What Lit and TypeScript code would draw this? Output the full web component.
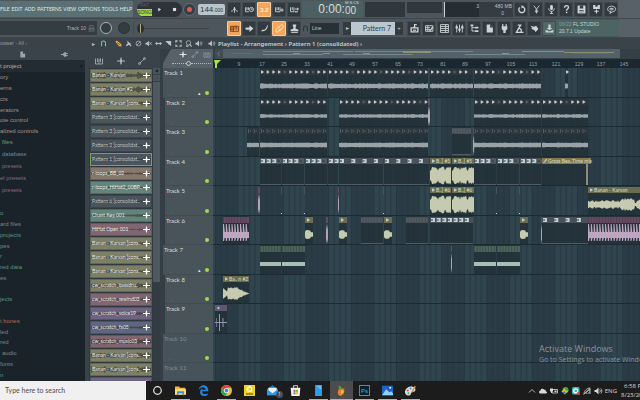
import { LitElement, html, svg, css, nothing } from "lit";
import { customElement, property } from "lit/decorators.js";
import { classMap } from "lit/directives/class-map.js";

const ICONS: Record<string, unknown> = {
  play: svg`<path d="M4 2l9 6-9 6z"/>`,
  stop: svg`<rect x="3" y="3" width="10" height="10"/>`,
  metro: svg`<path class="s" d="M8 14V4M2 11c4 0 5-3 6-7 1 4 2 7 6 7"/>`,
  keysclock: svg`<path class="s" d="M1 4v8h6M3.500 4v5M6 4v5"/><circle class="s" cx="11.500" cy="8" r="3.700"/><path class="s t" d="M11.500 6v2h2"/>`,
  count: svg`<text x="8" y="12" text-anchor="middle" font-size="11" font-weight="700">3.2</text>`,
  keysplus: svg`<path class="s" d="M1 4v8h8V4M3.700 4v5M6.400 4v5M12.500 6v6M9.500 9h6"/>`,
  keysloop: svg`<path class="s" d="M1 4v8h6V4M4 4v5"/><path d="M9 6h4V4l3 3-3 3V8H9zM14 11H11v-1l-3 2 3 2v-1h3z"/>`,
  keyboard: svg`<path class="s" d="M1 4h14v9H1zM1 7h5M1 10h5M6 4v9M9 4v6M12 4v6"/>`,
  arrow: svg`<path d="M1 6h7V2l7 6-7 6v-4H1z"/>`,
  brush: svg`<path d="M14 1c0 6-2 11-9 12H2l2-3c3 1 5 0 6-2 2-2 2-5 4-7z"/>`,
  link: svg`<path class="s" d="M7 6l3-4c3-2 6 1 4 4l-3 4c-2 2-4 1-4-1M9 10l-3 4c-3 2-6-1-4-4l3-4c2-2 4-1 4 1"/>`,
  stamp: svg`<path d="M5 1h6v3l-1 1v3l5 2v3H1v-3l5-2V5L5 4z"/><path class="s" d="M2 15h12"/>`,
  magnet: svg`<path class="s w" d="M3.500 14V7a4.500 4.500 0 0 1 9 0v7"/>`,
  power: svg`<path class="s w" d="M9 3a5.300 5.300 0 1 1-4 1.300"/><path d="M8 0l4 3-4 3z"/>`,
  scissors: svg`<path class="s" d="M3 1l7 9M13 1L6 10M8 9v6M5 12h6"/>`,
  mic: svg`<rect x="5.500" y="0" width="5" height="9" rx="2.500"/><path class="s" d="M3 6c0 7 10 7 10 0M8 11v4M5 15h6"/>`,
  help: svg`<path class="s w" d="M4.500 5c0-5 7-5 7-1 0 3-3.500 3-3.500 6"/><rect x="7" y="12" width="2.500" height="2.500"/>`,
  save: svg`<path d="M1 1h14v14H1z"/><path class="k" d="M5 1h6v5H5zM4 9h8v1H4zM4 12h8v1H4z"/>`,
  savenew: svg`<path d="M2 0h12v7H2zM7 8h2v2h3v2H9v3H7v-3H4v-2h3z"/><path class="k" d="M6 0h4v3H6z"/>`,
  chat: svg`<path class="s" d="M8 2c-9 0-9 10-1 10l-2 3 5-3c8-1 7-10-2-10zM4.500 6h7M4.500 8.500h7"/>`,
  render: svg`<path class="s w" d="M2 7h12v7H2z"/><path d="M7 0h5v2H9v3h2L8 8 5 5h2z"/><path d="M5 10h6v2H5z"/>`,
  playlist: svg`<path class="s" d="M1 3h13v10H1zM1 6.500h8M1 10h8M5 3v10"/><path class="s w" d="M8 13l6-8"/>`,
  rack: svg`<path class="s" d="M1 1h14v14H1zM1 4.500h14M1 8h14M1 11.500h14M10 1v14"/>`,
  mixer: svg`<path class="s" d="M3 1v14M8 1v14M13 1v14"/><path d="M1 4h4v4H1zM6 8h4v4H6zM11 4h4v4h-4z"/>`,
  tree: svg`<path d="M1 1h5v3H1zM9 5h6v3H9zM9 11h6v3H9z"/><path class="s" d="M3.500 4v8.500H9M3.500 6.500H9"/>`,
  file: svg`<path d="M3 1h6l5 5v9H3z"/><path class="k" d="M9 1v5h5z"/>`,
  plug: svg`<path d="M4 0h2v4h4V0h2v4h1v5l-3 3v4H6v-4L3 9V4h1z"/>`,
  plugside: svg`<path d="M0 7h4l4-4h4v2h4v2h-4v2h4v2h-4v2H8L4 9H0z"/>`,
  figure: svg`<path class="s w" d="M5 2h5l-3 5 4 3v4M7 7l-4 7M1 15h14"/>`,
  hand: svg`<path d="M1 3l6 2 4-2 4 6-5 5-3-4-5-1 2-2z"/>`,
  download: svg`<path d="M6 1h4v6h3l-5 4-5-4h3zM1 11h3l2 2h4l2-2h3v4H1z"/>`,
  pencil: svg`<path d="M1 4l3-3 10 8 1 6-6-1z"/><path class="s k2" d="M5 6l6 5"/>`,
  paint: svg`<path d="M5 1l5 5 3 1-1 2 3 4-2 2-4-4-5 3-2-2 4-4z"/>`,
  no: svg`<circle class="s" cx="8" cy="8" r="5.500"/><path class="s" d="M4 12l8-8"/>`,
  mute: svg`<path d="M1 6h3l5-4v12L4 10H1z"/><path class="s" d="M10 5l5 6M15 5l-5 6"/>`,
  slip: svg`<path d="M0 8l5-4v3h6V4l5 4-5 4V9H5v3z"/>`,
  slice: svg`<path d="M1 2h13v12l-4-4-2 1-2-4-2-1z"/>`,
  select: svg`<path class="s w" d="M2 6V2h4M10 2h4v4M14 10v4h-4M6 14H2v-4"/>`,
  zoom: svg`<circle class="s" cx="8" cy="6.500" r="5"/><path class="s w" d="M11 10l4 5M2 14h6"/>`,
  speaker: svg`<path d="M1 6h3l5-5v14l-5-5H1z"/><path class="s" d="M11 5c2 2 2 4 0 6M13.500 3c3 3 3 7 0 10"/>`,
  keys: svg`<path class="s" d="M1 3v11h14V3M5 3v7M8 3v11M11 3v7"/>`,
  auto: svg`<path class="s" d="M3 13L13 3"/><circle class="s" cx="3" cy="13" r="2"/><circle class="s" cx="13" cy="3" r="2"/>`,
  cross: svg`<path d="M0 7h6l1-6h2l1 6h6v2h-6l-1 6H7L6 9H0z"/>`,
  up: svg`<path class="s" d="M2 11l6-6 6 6"/>`,
  left: svg`<path class="s" d="M10 2L5 8l5 6"/>`,
  fader: svg`<path class="s" d="M4 1h8v6H4zM2 8h12v6H2zM2 11h12"/>`,
  cloud: svg`<path d="M3 13a3 3 0 0 1 0-6 4 4 0 0 1 7-2 4 4 0 0 1 4 4 2 2 0 0 1 0 4z"/>`,
  battery: svg`<path class="s" d="M4 5h11v7H4z"/><path d="M0 3h6v6H4v3H2V9H0zM9 7h4v3H9z"/>`,
  wifi: svg`<path class="s" d="M2 14C2 8 8 2 14 2v12M6 14c0-4 4-8 8-8M10 14c0-2 2-4 4-4M1 15L14 3"/>`,
  idm: svg`<circle cx="9" cy="6" r="6" fill="#45a83c"/><path d="M1 9l6-6 3 5 5-1-7 8z" fill="#f0c52e"/><path d="M2 11l6-3 2 6z" fill="#2f74d0"/>`,
  teal: svg`<rect x="0" y="0" width="15" height="15" rx="3" fill="#3db4b8"/><circle cx="7.500" cy="7.500" r="4" fill="none" stroke="#fff" stroke-width="2.500"/><circle cx="13" cy="13" r="3" fill="#d8453b"/>`,
  ring: svg`<circle cx="8" cy="8" r="5.500" fill="none" stroke="#e8e8e8" stroke-width="1.800"/>`,
  explorer: svg`<path d="M0 2h6l1 2h8v10H0z" fill="#e9b94a"/><path d="M0 6h16v8H0z" fill="#f9dc86"/><path d="M3 9h10v6h-2v-3H5v3H3z" fill="#3c8edb"/>`,
  edge: svg`<path d="M1 7C2-2 15-2 15 8v1H6c0 5 5 5 8 3v3C8 18 2 15 3 9c1-3 3-4 4-4-1 1-1 2-1 2h5c0-5-7-5-10 0z" fill="#1f84dc"/>`,
  chrome: svg`<circle cx="8" cy="8" r="8" fill="#e8c12c"/><path d="M1 4a8 8 0 0 1 14 0H8L5 9z" fill="#dc4437"/><path d="M1 4l4 6 4 0-2 6A8 8 0 0 1 1 4z" fill="#35a353"/><circle cx="8" cy="8" r="3.700" fill="#fff"/><circle cx="8" cy="8" r="2.800" fill="#4285f4"/>`,
  pot: svg`<path d="M0 0h16v16H0z" fill="#f2d21f"/><circle cx="8" cy="6" r="3.200" fill="none" stroke="#fff" stroke-width="2"/><path d="M3 12h10v2H3z" fill="#7c6a10"/>`,
  mail: svg`<path d="M0 6l8-6 8 6v9H0z" fill="#1670b8"/><path d="M2 4h12v5l-6 4-6-4z" fill="#eef5fa"/><path d="M0 6l8 6 8-6v9H0z" fill="#2f9be4"/>`,
  store: svg`<path d="M1 4h14l-1 12H2z" fill="#f2f2f2"/><path d="M5 4V1h6v3" fill="none" stroke="#f2f2f2" stroke-width="1.200"/><path d="M5 7h3v3H5z" fill="#e8542a"/><path d="M8.500 7h3v3h-3z" fill="#80b52b"/><path d="M5 10.500h3v3H5z" fill="#2a9fdc"/><path d="M8.500 10.500h3v3h-3z" fill="#f1b62b"/>`,
  phone: svg`<path d="M3 0h10v16H3z" fill="#2d9fe6"/><path d="M4 1h8v6z" fill="#63c3f5"/>`,
  fruit: svg`<path d="M4 6c3-3 10-1 8 4-1 4-4 6-6 6-4-2-4-7-2-10z" fill="#ef7a22"/><path d="M8 7c3 0 4 2 2 5s-3 1-3-1z" fill="#f7c24a"/><path d="M4 1c3 0 4 2 5 5l4-3-2 4-5-1C4 5 3 3 4 1z" fill="#4e9d3a"/>`,
  ps: svg`<rect x="0.700" y="0.700" width="14.600" height="14.600" fill="#06212d" stroke="#1aa7cb" stroke-width="1.400"/><text x="8" y="11.500" text-anchor="middle" font-size="9" fill="#27bde4">Ps</text>`,
  photos: svg`<path d="M0 1h16v14H0z" fill="#1d62c4"/><path d="M0 15l6-9 5 5 2-2 3 3v3z" fill="#8fd0f8"/><circle cx="12" cy="4" r="1.500" fill="#fff"/>`,
  palette: svg`<path d="M9 2c8 0 8 8 2 8-2 0-2 2-3 4-4 3-8 0-8-4s4-8 9-8z" fill="#dbe2e6"/><circle cx="4" cy="8" r="1.500" fill="#d8453b"/><circle cx="8" cy="5" r="1.500" fill="#3f8ed8"/><circle cx="5" cy="12" r="1.500" fill="#4aa84a"/><path d="M9 10l5-9 2 1-5 9z" fill="#d98b3e"/>`,
};

@customElement("fl-icon")
class FlIcon extends LitElement {
  @property() name = "";
  static styles = css`
    :host { display: inline-flex; flex: none; width: 9px; height: 9px; }
    svg { width: 100%; height: 100%; fill: currentColor; overflow: visible; font-family: "Liberation Sans", sans-serif; }
    .s { fill: none; stroke: currentColor; stroke-width: 1.6; }
    .w { stroke-width: 2.4; }
    .k { fill: #353c42; }
    .k2 { stroke: #353c42; }
  `;
  render() {
    return html`<svg viewBox="0 0 16 16" aria-hidden="true">${ICONS[this.name]}</svg>`;
  }
}

/** Deterministic noise in 0..1 so that waveforms are stable between renders. */
const noise = (n: number) => {
  const v = Math.sin(n * 127.1 + 11.7) * 43758.5453;
  return v - Math.floor(v);
};

type Envelope = (t: number, n: number) => number;
const wavePath = (x: number, w: number, mid: number, amp: number, env: Envelope) => {
  const top: string[] = [];
  const bottom: string[] = [];
  for (let i = 0; i <= w; i++) {
    const a = Math.max(0.3, amp * env(i / w, noise(x + i)));
    top.push(`${x + i},${(mid - a).toFixed(1)}`);
    bottom.unshift(`${x + i},${(mid + a).toFixed(1)}`);
  }
  return `M${top.join("L")}L${bottom.join("L")}Z`;
};

interface Clip {
  kind: "beat" | "steps" | "pattern" | "ghost" | "olive" | "pink" | "green" | "purple" | "sliver" | "automation" | "hair";
  x: number;
  w: number;
  label?: string;
  shape?: "thin" | "thick" | "block" | "burst" | "tail" | "song" | "every2";
}
const c = (kind: Clip["kind"], x: number, w: number, shape?: Clip["shape"], label?: string): Clip => ({ kind, x, w, shape, label });

interface Track { name: string; nested?: boolean; parent?: boolean; idle?: boolean; clips: Clip[] }
const TRACKS: Track[] = [
  { name: "Track 1", parent: true, clips: [c("beat", 47, 67, "thick"), c("beat", 115, 100, "thick"), c("beat", 217, 43, "thick"), c("beat", 261, 67, "thick"), c("beat", 352, 3, "thick")] },
  { name: "Track 2", nested: true, clips: [c("beat", 47, 67, "thin"), c("beat", 126, 89, "thin"), c("sliver", 215, 2), c("beat", 261, 67, "thin"), c("beat", 329, 46, "thin")] },
  { name: "Track 3", nested: true, clips: [c("steps", 34, 12), c("steps", 47, 67), c("steps", 126, 89), c("ghost", 239, 19), c("sliver", 260, 2), c("steps", 261, 67), c("steps", 329, 46)] },
  { name: "Track 4", nested: true, clips: [c("pattern", 47, 21), c("pattern", 69, 22), c("pattern", 92, 22), c("pattern", 115, 10), c("pattern", 126, 44, "every2"), c("pattern", 171, 45, "every2"), c("olive", 217, 21, "block", "B..] #5"), c("olive", 239, 22, "block", "B..] #5"), c("pattern", 261, 22), c("pattern", 284, 22), c("pattern", 307, 21), c("automation", 329, 49, undefined, "Gross Bea..Time mix")] },
  { name: "Track 5", nested: true, clips: [c("sliver", 45, 2), c("hair", 68, 1), c("hair", 91, 1), c("sliver", 125, 1), c("hair", 170, 1), c("olive", 217, 21, "block", "B..] #6"), c("olive", 239, 22, "block", "B..] #6"), c("hair", 283, 1), c("hair", 306, 1), c("olive", 375, 400, "song", "Banan - Karvan")] },
  { name: "Track 6", nested: true, clips: [c("pink", 10, 26), c("olive", 92, 8, "tail"), c("sliver", 113, 2), c("olive", 126, 8, "tail"), c("ghost", 148, 22), c("olive", 171, 8, "tail"), c("ghost", 193, 22), c("pattern", 217, 43), c("olive", 307, 8, "tail"), c("sliver", 328, 1), c("pattern", 329, 46, "every2"), c("pink", 375, 400)] },
  { name: "Track 7", parent: true, clips: [c("green", 47, 21), c("green", 69, 23), c("sliver", 238, 1), c("green", 261, 22), c("green", 284, 23)] },
  { name: "Track 8", nested: true, clips: [c("olive", 10, 26, "burst", "Ba.. n #2")] },
  { name: "Track 9", nested: true, clips: [c("purple", 2, 12)] },
  { name: "Track 10", idle: true, clips: [] },
  { name: "Track 11", idle: true, clips: [] },
];

const steps = (w: number, pitch: number) => Array.from({ length: Math.max(1, Math.floor((w + 2) / pitch)) }, (_, i) => i);
const MARK = "h1v-1l2 1.500-2 1.500v-1h-1z";

function drawClip(k: Clip) {
  const body = svg`<rect class="body" x=${k.x} y="0" width=${k.w} height="29"/>`;
  const head = (cls: string) => svg`<rect class=${cls} x=${k.x} y="1" width=${k.w} height="6"/>`;
  switch (k.kind) {
    case "beat":
      return svg`${body}${head("h-dark")}
        ${steps(k.w, 5.65).map((i) => svg`<path class=${i % 5 === 4 ? "dim" : "lit"} d="M${k.x + 1 + i * 5.65} 3.500${MARK}M${k.x + 1 + i * 5.65} 2.500h1v3h-1z"/>`)}
        <path class="w-grey" d=${wavePath(k.x, k.w, 18, k.shape === "thin" ? 2 : 2.8, (_t, n) => 0.6 + n * 0.4)}/>`;
    case "steps":
      return svg`${body}${head("h-dark")}
        ${steps(k.w, 5.65).map((i) => svg`<path class="dim" d="M${k.x + 1 + i * 5.65} 2h1v4h-1zM${k.x + 3 + i * 5.65} 3h1v2h-1z"/>`)}
        <path class="w-grey" d=${wavePath(k.x, k.w, 18, 2.4, (_t, n) => 0.85 + n * 0.15)}/>`;
    case "pattern":
      return svg`${body}${head("h-grey")}
        ${steps(k.w, k.shape ? 11.3 : 5.65).map((i) => {
          const x = k.x + 1 + i * (k.shape ? 11.3 : 5.65);
          return svg`<path class=${!k.shape && k.w < 30 && i === 3 ? "dim" : "cell"} d="M${x} 2h4v4h-4z"/><path class="h-dark" d="M${x} 3h2v.6h-2zM${x} 4.400h2v.6h-2z"/>`;
        })}
        <rect class="dim" x=${k.x} y="27" width=${k.w} height="1.500"/>`;
    case "ghost":
      return svg`${body}${head("h-grey")}
        ${steps(k.w, 2.83).map((i) => svg`<rect class="dim" x=${k.x + i * 2.83} y="2" width="1.500" height="4"/>`)}
        <rect class="dim" x=${k.x} y="27" width=${k.w} height="1.500"/>`;
    case "olive": {
      const env: Envelope =
        k.shape === "block" ? (t, n) => (t % 0.34 < 0.05 ? 0.55 : 0.75 + n * 0.25)
        : k.shape === "tail" ? (t, n) => (t < 0.12 ? 0.3 : t < 0.65 ? 0.42 + n * 0.08 : 0.25)
        : k.shape === "burst" ? (t, n) => (t < 0.18 ? 0.6 - t * 2.4 : (0.45 + n * 0.2 + (t < 0.6 ? 0.1 : 0)) * Math.min(1, (1 - t) * 2.2))
        : (t, n) => { const p = (t * k.w) / 52; return p < 0.62 ? 0.25 + n * 0.25 : p < 0.9 ? 0.4 + n * 0.35 : p < 0.94 ? 0.15 : 0.4 + n * 0.2; };
      return svg`${body}${head("h-olive")}
        <path class="lit" d="M${k.x + 2} 3.500${MARK}M${k.x + 2} 2.500h1v3h-1z"/>
        <path class="w-olive" d=${wavePath(k.x, k.w, 18.5, 9, env)}/>
        ${k.label ? svg`<text x=${k.x + 6} y="6">${k.label}</text>` : nothing}`;
    }
    case "pink":
      return svg`${body}${head("h-pink")}
        <rect class="w-pink" x=${k.x} y="16" width=${k.w} height="6"/>
        ${steps(k.w, 2.83).map((i) => svg`<path class="w-pink" d="M${k.x + i * 2.83} 8h1l.8 8v5l-.8 4h-1z"/><rect class="tick" x=${k.x + i * 2.83} y="1" width="0.700" height="6"/>`)}`;
    case "green":
      return svg`${body}${head("h-green")}
        ${steps(k.w, 2.83).map((i) => svg`<rect class="tick" x=${k.x + i * 2.83} y="1" width="0.800" height="6"/>`)}
        <rect class="w-green" x=${k.x} y="17" width=${k.w} height="4"/>`;
    case "purple":
      return svg`${body}${head("h-purple")}
        <path class="lit" d="M${k.x + 2} 3.500${MARK}"/>
        <path class="w-purple" d="M2 18h1v-4h.6v4h2.400V10h1v8h2.500v-4h1v4H14v1h-3.500v4h-1v-4H7v8H6v-8H3.600v4H3v-4H2z"/>`;
    case "automation":
      return svg`<rect class="body" x=${k.x} y="0" width="46" height="29"/>${head("h-gold")}
        <path class="w-edge" d="M${k.x} 28h44V7h2v22h-46z"/>
        <path class="lit" d="M${k.x + 1} 6l3-4h1v1l-3 3z"/>
        <text x=${k.x + 6} y="6">${k.label}</text>`;
    case "sliver":
      return svg`<rect class="h-pink" x=${k.x} y="1" width=${k.w} height="6"/><path class="w-sliver" d="M${k.x} 14l${k.w / 2}-6 ${k.w / 2} 6v9l-${k.w / 2} 5-${k.w / 2}-5z"/>`;
    case "hair":
      return svg`<rect class="hair" x=${k.x} y="1" width=${k.w} height="7"/><rect class="lit" x=${k.x} y="27" width="1" height="1"/>`;
  }
}

@customElement("fl-lane")
class FlLane extends LitElement {
  @property({ attribute: false }) clips: Clip[] = [];
  static styles = css`
    :host { display: block; overflow: hidden; border-bottom: 1px solid #1b2a33; box-sizing: border-box; }
    svg { display: block; width: 100%; height: 29px; }
    text { font: 5px Lato, "Liberation Sans", sans-serif; fill: #dcddc4; }
    .body { fill: #232f37; fill-opacity: 0.8; }
    .h-dark { fill: #2c363c; }
    .h-grey { fill: #485158; }
    .h-olive { fill: #6a6c50; }
    .h-gold { fill: #827a4c; }
    .h-pink { fill: #684a64; }
    .h-green { fill: #4b6559; }
    .h-purple { fill: #5f5874; }
    .lit { fill: #c4cbcd; }
    .dim { fill: #525c63; }
    .cell { fill: #c3d0d6; }
    .hair { fill: #4b525a; }
    .tick { fill: #2b3038; fill-opacity: 0.5; }
    .w-grey { fill: #98a2a7; }
    .w-olive { fill: #c6cab0; }
    .w-pink { fill: #bea5c0; }
    .w-green { fill: #a9beb5; }
    .w-purple { fill: #9695b0; }
    .w-edge { fill: #8b8d78; }
    .w-sliver { fill: #b5a3b3; }
  `;
  render() {
    return html`<svg aria-hidden="true">${this.clips.map(drawClip)}</svg>`;
  }
}

interface Source { name: string; tone: string; selected?: boolean; level: number }
const s = (name: string, tone: string, level: number, selected = false): Source => ({ name, tone, level, selected });
const SOURCES: Source[] = [
  s("Banan - Karvan", "olive", 4), s("Banan - Karvan #2", "olive", 4), s("Banan - Karvan [cons..", "olive", 3),
  s("Pattern 3 [consolidat..", "slate", 1), s("Pattern 3 [consolidat..", "slate", 1), s("Pattern 2 [consolidat..", "slate", 1), s("Pattern 1 [consolidat..", "slate", 1, true),
  s("r-loops_BB_02", "taupe", 2), s("r-loops_HiHat2_00BP..", "teal", 1), s("Pattern 6 [consolidat..", "slate", 1), s("Chant Key 001", "teal", 2), s("HiHat Open 001", "rose", 1),
  s("Banan - Karvan [cons..", "olive", 2), s("Banan - Karvan [cons..", "olive", 2), s("Banan - Karvan [cons..", "olive", 2),
  s("cw_scratch_bassdru..", "olive", 3), s("cw_scratch_rewind03", "rose", 2), s("cw_scratch_voice19", "violet", 2), s("cw_scratch_fx05", "blue", 2), s("cw_scratch_music03", "rose", 4),
  s("Banan - Karvan [cons..", "olive", 4), s("Banan - Karvan [cons..", "olive", 4), s("", "violet", 3),
];

type Entry = [string, string];
const TREE: { spacing: string; items: Entry[] }[] = [
  { spacing: "near", items: [["ory", "sand"], ["erns", "sand"], ["cts", "sand"], ["erators", "sand"], ["ote control", "sand"], ["alized controls", "sand"], ["files", "leaf"]] },
  { spacing: "wide", items: [["database", "sky"], ["presets", "plum"], ["el presets", "plum"], ["presets", "plum"], ["", "mint"]] },
  { spacing: "near", items: [["o", "leaf"], ["ard files", "mist"], ["projects", "mint"], ["pes", "mist"], ["r", "mint"], ["red data", "mint"], ["es", "mist"], ["", "mist"], ["jects", "mint"], ["", "mist"], ["t bones", "rust"], ["led", "mist"], ["red", "mist"], ["audio", "mist"], ["fonts", "mist"], ["n", "mint"]] },
];
const INDENTED = new Set(["files", "database", "presets", "audio"]);

const MENU = ["FILE", "EDIT", "ADD", "PATTERNS", "VIEW", "OPTIONS", "TOOLS", "HELP"];
const TOOLS = [["pencil", "Draw", "hot"], ["paint", "Paint", ""], ["no", "Delete", ""], ["mute", "Mute", ""], ["slip", "Slip", ""], ["slice", "Slice", ""], ["select", "Select", ""], ["zoom", "Zoom", ""], ["speaker", "Playback", ""]];
const APPS = [["ring", "Cortana", ""], ["explorer", "File Explorer", "open"], ["edge", "Edge", ""], ["chrome", "Chrome", "open"], ["pot", "PotPlayer", ""], ["mail", "Mail", ""], ["store", "Store", ""], ["phone", "Your Phone", "open"], ["fruit", "FL Studio", "open front"], ["ps", "Photoshop", "open"], ["photos", "Photos", "open"], ["palette", "Paint", "open"]];

@customElement("app-root")
class AppRoot extends LitElement {
  static styles = css`
    :host { display: flex; flex-direction: column; height: 100vh; min-height: 240px; overflow: hidden; background: #2e3f4a; color: #b9c2c6; font: 6px/8px "Liberation Sans", sans-serif; }
    * { box-sizing: border-box; }
    button, input, select { font: inherit; color: inherit; border: 0; padding: 0; margin: 0; background: none; min-width: 0; border-radius: 0; }
    ul { list-style: none; margin: 0; padding: 0; }
    .bar { display: flex; align-items: center; flex: none; height: 19px; background: #4d565d; border-bottom: 1px solid #3f474d; overflow: hidden; }
    .menu { display: flex; flex: none; align-items: center; justify-content: space-between; width: 133px; height: 16px; background: #5a7074; color: #e2e9ea; padding-right: 1px; font: 5px/8px Lato, sans-serif; }
    .menu button { flex: none; }
    .transport { display: flex; align-items: center; width: 45px; height: 15px; margin-left: 4px; border-radius: 8px; background: #2d3338; overflow: hidden; flex: none; color: #d8dddf; }
    .mode { display: flex; flex-direction: column; width: 15px; height: 15px; font-size: 5px; line-height: 7px; text-align: center; color: #5a6166; }
    .mode .song { background: #a0d84e; color: #2e4315; }
    .transport button { flex: 1; display: grid; place-items: center; }
    .transport fl-icon { width: 5px; height: 5px; }
    .rec { width: 13px; height: 13px; border-radius: 50%; background: #373e44; border: 1px solid #646d74; margin: 0 2px 0 1px; flex: none; display: grid; place-items: center; }
    .rec::after { content: ""; width: 5px; height: 5px; border-radius: 50%; background: #ea5748; }
    .tempo { display: flex; align-items: baseline; justify-content: center; width: 27px; height: 11px; line-height: 11px; background: #b9c5cb; color: #2d363c; border-radius: 2px; font-size: 8px; flex: none; margin-right: 2px; }
    .tempo small { font-size: 5px; }
    .keys { display: flex; gap: 1px; flex: none; }
    .key { display: grid; place-items: center; width: 14px; height: 15px; background: #32393f; border: 1px solid #414a50; border-radius: 1px; color: #ced3d5; flex: none; }
    .key.hot { background: #f0a45e; border-color: #ffcb92; color: #7b3c14; }
    .key.glow { background: #f4a65c; border-color: #ffcb92; color: #fff0d0; }
    .key.soft { background: #4f6965; }
    .time { display: grid; grid-template-columns: auto auto; grid-template-rows: 4px 12px; justify-content: center; width: 61px; height: 17px; background: #4d6061; color: #d3dcdc; font-size: 12px; line-height: 11px; flex: none; margin-left: 1px; padding-left: 12px; }
    .time b { grid-row: 1 / -1; font-weight: 400; padding-top: 3px; }
    .time small { font-size: 10px; grid-column: 2; padding-top: 1px; line-height: 10px; }
    .time i { grid-column: 2; grid-row: 1; justify-self: end; font: 4px/4px "Liberation Sans", sans-serif; }
    .well { background: #30373d; height: 15px; flex: none; margin-left: 2px; }
    .scope { width: 40px; }
    .pitch { width: 35px; height: 11px; align-self: flex-start; margin-top: 2px; }
    .load { display: grid; grid-template-columns: 1fr 1fr; width: 69px; margin: 0 1px 0 2px; line-height: 7px; text-align: right; padding: 1px 1px 0; border-left: 1px solid #c8d0d4; background: linear-gradient(90deg, #272e33 50%, #353d43 50%); font-size: 5px; }
    .load span:nth-child(3) { grid-column: 2; padding-right: 8px; }
    .rest { flex: 1; align-self: stretch; background: #586168; }
    .hint { display: flex; align-items: center; justify-content: flex-end; gap: 2px; width: 97px; height: 14px; background: #353c42; color: #aab2b6; padding-right: 2px; flex: none; font: 5px/8px "Liberation Sans", sans-serif; }
    .hint fl-icon { width: 7px; height: 7px; color: #6b747a; }
    .knobs { display: flex; gap: 6px; width: 37px; justify-content: center; flex: none; border-right: 1px solid #414a50; }
    .knob { width: 12px; height: 12px; border-radius: 50%; background: #343b41; border: 1px solid #a8b1b5; }
    .knob.off { border-color: #2c3338; }
    .shift { appearance: none; width: 72px; height: 9px; margin: 0 18px 0 3px; flex: none; background: linear-gradient(#4d565d 4px, #3c444a 4px, #3c444a 5px, #4d565d 5px); }
    .shift::-webkit-slider-thumb { appearance: none; width: 7px; height: 9px; border-radius: 50%; background: linear-gradient(90deg, #2b3237 3px, #b8a876 3px, #b8a876 4px, #2b3237 4px); }
    .snapicon { margin: 0 1px; color: #2f363b; width: 7px; height: 7px; }
    .snap { appearance: none; width: 29px; height: 11px; background: #2a3136; padding: 0 2px; color: #c0c7ca; font: 5px/11px "Liberation Sans", sans-serif; flex: none; }
    .selector { display: flex; align-items: stretch; height: 13px; margin: 0 4px; flex: none; }
    .selector button { background: #333a40; width: 8px; color: #c3c9cc; }
    .selector .pattern { width: 44px; background: #bac7cf; color: #354149; text-align: right; padding-right: 4px; font: 7px/13px Lato, sans-serif; }
    .news { width: 63px; height: 16px; background: #4c6563; color: #c3d2cf; padding: 1px 3px; flex: none; text-align: left; font-size: 5px; line-height: 7px; }
    .news span { color: #859c98; }

    .main { display: grid; grid-template-columns: 85px minmax(0, 1fr); flex: 1; min-height: 0; }
    .browser { display: flex; flex-direction: column; background: #1a232a; overflow: hidden; min-height: 0; }
    .crumb { height: 11px; background: #3a434a; color: #939ca1; font: 5px/11px "Noto Sans", sans-serif; }
    .tabs { display: flex; justify-content: space-around; align-items: center; height: 11px; padding-left: 2px; background: #3a434a; color: #9ba4a8; flex: none; }
    .tabs fl-icon { width: 7px; height: 7px; }
    .project { display: flex; justify-content: space-between; height: 12px; line-height: 12px; background: #232c33; color: #c7ab9c; flex: none; padding-right: 2px; text-align: left; }
    .project span:last-child { color: #0e1418; font-size: 5px; }
    .tree li { height: 11px; line-height: 11px; }
    .tree .near li:nth-child(4n) { height: 10px; line-height: 10px; }
    .tree .wide li { height: 12px; line-height: 13px; }
    .tree button { display: block; line-height: inherit; }
    .inset { padding-left: 2px; }
    .sand { color: #ad8f85; } .leaf { color: #6e9f68; } .sky { color: #6886a6; } .plum { color: #8d6586; } .mist { color: #76868f; } .mint { color: #5d9480; } .rust { color: #b06a53; }

    .playlist { display: flex; flex-direction: column; min-width: 0; min-height: 0; border-left: 4px solid #3a434a; }
    .title { display: flex; align-items: center; height: 11px; background: #3a434a; flex: none; overflow: hidden; gap: 1px; color: #bcc3c6; }
    .title .tool { width: 9px; height: 9px; flex: none; display: grid; place-items: center; }
    .title .tool fl-icon { width: 7px; height: 7px; }
    .title .on { color: #5cd08e; margin-right: 5px; }
    .title .hot { color: #eba84a; }
    .title h1 { margin: 0 0 0 1px; font: 600 6px/10px "Noto Sans", sans-serif; color: #c9d0d3; white-space: nowrap; }
    .title .spk { margin-left: 3px; }
    .work { display: flex; flex: 1; min-height: 0; }
    .picker { display: grid; grid-template-columns: 64px 7px; grid-template-rows: 19px minmax(0, 1fr); width: 74px; background: #353e45; flex: none; min-height: 0; }
    .picker .kinds { grid-column: 1 / -1; display: flex; justify-content: space-between; align-items: center; padding: 5px 14px 0 6px; background: #3a434a; color: #afb7bb; }
    .kinds fl-icon { width: 8px; height: 8px; }
    .sources { overflow: hidden; padding: 1px; background: #303940; }
    .source { display: grid; grid-template-columns: minmax(0, 1fr) 7px; align-items: center; width: 100%; height: 13px; margin-bottom: 1px; padding: 0 1px; text-align: left; color: #eceee8; position: relative; border: 1px solid #00000030; font: 5px/11px Lato, sans-serif; }
    .source svg { position: absolute; inset: 0; width: 100%; height: 100%; fill: #23262380; }
    .source span { position: relative; white-space: nowrap; }
    .source fl-icon { position: relative; width: 7px; height: 7px; color: #fff; }
    .olive { background: #7d7f66; } .slate { background: #4b545c; } .source.slate { color: #bcc4c8; } .taupe { background: #86786c; } .teal { background: #64847a; } .rose { background: #7f6670; } .violet { background: #6c6480; } .blue { background: #5f6682; }
    .source.selected { border-color: #7ba246; }
    .scroll { display: flex; flex-direction: column; background: #343c43; }
    .scroll button { height: 6px; color: #20272c; display: grid; place-items: center; background: #4b545b; margin-bottom: 1px; }
    .scroll fl-icon { width: 4px; height: 4px; }
    .thumb { flex: none; height: 64%; background: #4e5860; }

    .heads { width: 50px; flex: none; background: #343d44; overflow: hidden; }
    .corner { height: 19px; background: #566169; clip-path: polygon(8px 0, 100% 0, 100% 100%, 0 100%, 0 14px); display: grid; grid-template-rows: 10px 9px; justify-items: end; align-items: center; padding-right: 2px; }
    .corner div { display: flex; gap: 4px; color: #98a2a7; }
    .corner fl-icon { width: 8px; height: 7px; }
    .corner fl-icon:first-child { color: #e1e6e8; }
    .corner .zoomer { gap: 0; align-items: center; }
    .corner .zoomer::before { content: ""; width: 14px; border-top: 1px dotted #b3bbbf; }
    .corner .zoomer::after { content: ""; width: 20px; border-top: 1px dotted #b3bbbf; }
    .corner i { width: 5px; height: 5px; border: 1px solid #c1c9cc; border-radius: 50%; }
    .head { display: grid; grid-template-columns: 1fr 6px 6px; grid-template-rows: 9px 1fr; align-items: center; height: 29px; background: #48545a; border-bottom: 1px solid #414c52; padding: 0 3px 1px 1px; color: #d8dddf; }
    .head:nth-child(even), fl-lane:nth-child(odd) { height: 30px; }
    .head.nested { margin-left: 2px; }
    .head.idle { color: #818d92; background: #46535a; }
    .head b { grid-column: 1 / -1; font: 6px/8px Lato, sans-serif; }
    .head small { font-size: 4px; line-height: 4px; align-self: end; padding-left: 5px; color: #747f85; }
    .head span { font-size: 5px; color: #dde2e3; margin-top: 12px; }
    .head button { grid-column: 3; grid-row: 2; width: 4px; height: 4px; border-radius: 50%; background: #9bdc48; justify-self: center; margin-top: 12px; }

    .arrange { flex: 1; min-width: 0; display: flex; flex-direction: column; overflow: hidden; position: relative; }
    .map { display: flex; height: 10px; background: #353f46; flex: none; }
    .map button { width: 8px; color: #8b959a; display: grid; place-items: center; margin-left: 2px; background: #424c53; }
    .map button fl-icon { width: 6px; height: 6px; }
    .map svg { height: 9px; flex: 1; background: #52616a; margin-right: 20px; min-width: 0; }
    .ruler { height: 9px; background: #1b2831; flex: none; width: 100%; display: block; }
    .ruler text { font: 5px "Liberation Sans", sans-serif; fill: #97a1a5; text-anchor: middle; }
    .lanes { flex: 1; overflow: hidden; background: #2d3f4a; display: grid; min-height: 0; }
    .lanes > * { grid-area: 1 / 1; min-width: 0; min-height: 0; }
    .grid { width: 100%; height: 100%; }
    .rows { overflow: hidden; }
    fl-lane { height: 29px; }
    .notice { position: absolute; left: 326px; bottom: 16px; white-space: nowrap; color: #87949a; font: 7px/10px "Open Sans", sans-serif; }
    .notice strong { display: block; font-weight: 400; font-size: 9px; line-height: 13px; }

    .taskbar { display: flex; height: 19px; background: #1c1c1d; flex: none; color: #dadada; font-family: "Open Sans", sans-serif; overflow: hidden; }
    .search { width: 146px; background: #f0f0f0; padding: 0 5px; font: 7px/19px Lato, sans-serif; flex: none; }
    .search::placeholder { color: #4c4c4c; opacity: 1; }
    .app { width: 23px; height: 19px; display: grid; place-items: center; flex: none; position: relative; }
    .app fl-icon { width: 11px; height: 11px; }
    .app.open::after { content: ""; position: absolute; left: 2px; right: 2px; bottom: 0; height: 1px; background: #7cc9c4; }
    .app.front { background: #4c4c4c; }
    .app.front::after { left: 0; right: 0; }
    .count { position: absolute; right: 1px; bottom: 2px; width: 7px; height: 7px; border-radius: 50%; background: #47505a; font-size: 5px; line-height: 7px; }
    .tray { display: flex; align-items: center; gap: 3px; margin-left: auto; flex: none; font-size: 6px; }
    .tray fl-icon { width: 8px; height: 8px; }
    .tray .clock { width: 20px; overflow: hidden; white-space: nowrap; line-height: 9px; padding-left: 1px; }
    .clock span { display: block; }
    .clock .hour { padding-left: 3px; }
  `;

  private key(icon: string, label: string, cls = "") {
    return html`<button class="key ${cls}" aria-label=${label}><fl-icon name=${icon}></fl-icon></button>`;
  }

  private topBars() {
    return html`
      <header class="bar">
        <nav class="menu">${MENU.map((m) => html`<button>${m}</button>`)}</nav>
        <div class="transport">
          <div class="mode"><span>PAT</span><span class="song">SONG</span></div>
          <button aria-label="Play"><fl-icon name="play"></fl-icon></button>
          <button aria-label="Stop"><fl-icon name="stop"></fl-icon></button>
        </div>
        <button class="rec" aria-label="Record"></button>
        <div class="tempo">144<small>.000</small></div>
        <div class="keys">
          ${this.key("metro", "Metronome")}${this.key("keysclock", "Wait for input")}${this.key("count", "Countdown", "glow")}${this.key("keysplus", "Blend recording")}${this.key("keysloop", "Loop recording")}
        </div>
        <div class="time"><b>0:00:</b><i>M:S:CS</i><small>00</small></div>
        <div class="well scope"></div>
        <div class="well pitch"></div>
        <div class="well load"><span>3</span><span>480 MB</span><span>0</span></div>
        <div class="keys">
          ${this.key("power", "Restart")}${this.key("scissors", "Cut")}${this.key("mic", "Record audio")}${this.key("help", "Help")}${this.key("save", "Save")}${this.key("savenew", "Save new version")}${this.key("chat", "Feedback")}
        </div>
        <div class="rest"></div>
      </header>
      <div class="bar">
        <div class="hint">Track 10<fl-icon name="fader"></fl-icon></div>
        <div class="knobs"><div class="knob"></div><div class="knob off"></div></div>
        <input class="shift" type="range" min="0" max="100" value="0" aria-label="Song position" />
        <div class="keys">
          ${this.key("keyboard", "Typing keyboard", "hot")}${this.key("arrow", "Step mode")}${this.key("brush", "Paint notes")}${this.key("link", "Link", "glow")}${this.key("stamp", "Stamp")}
        </div>
        <fl-icon class="snapicon" name="magnet"></fl-icon>
        <select class="snap" aria-label="Snap"><option>Line</option></select>
        <div class="selector"><button aria-label="Pattern list">▸</button><button class="pattern">Pattern 7</button><button aria-label="New pattern">+</button></div>
        <div class="keys">
          ${this.key("render", "Drop")}${this.key("playlist", "Playlist")}${this.key("rack", "Channel rack")}${this.key("mixer", "Mixer")}${this.key("tree", "Browser")}${this.key("file", "Project")}${this.key("plug", "Plugins")}${this.key("figure", "Tempo tap")}${this.key("hand", "Touch")}${this.key("download", "Update", "soft")}
        </div>
        <button class="news"><span>06/22</span> FL STUDIO<br />20.7.1 Update</button>
        <div class="rest"></div>
      </div>`;
  }

  private browser() {
    return html`<aside class="browser">
      <div class="crumb">owser - All ›</div>
      <div class="tabs"><fl-icon name="file"></fl-icon><fl-icon name="plugside"></fl-icon></div>
      <button class="project"><span>t project</span><span>▾</span></button>
      <div class="tree">
        ${TREE.map((g) => html`<ul class=${g.spacing}>${g.items.map(([t, tone]) => html`<li>${t ? html`<button class=${classMap({ [tone]: true, inset: INDENTED.has(t) })}>${t}</button>` : nothing}</li>`)}</ul>`)}
      </div>
    </aside>`;
  }

  private picker() {
    return html`<section class="picker">
      <div class="kinds"><fl-icon name="keys"></fl-icon><fl-icon name="cross"></fl-icon><fl-icon name="auto"></fl-icon></div>
      <div class="sources">
        ${SOURCES.map((o, n) => html`<button class=${classMap({ source: true, [o.tone]: true, selected: !!o.selected })}>
          <svg viewBox="0 0 62 12" preserveAspectRatio="none" aria-hidden="true"><path d=${wavePath(0, 62, 6, o.level, (t, r) => (0.4 + 0.6 * noise(n * 70 + t * 62)) * (0.5 + r / 2))}></path></svg>
          <span>${o.name}</span><fl-icon name="cross"></fl-icon>
        </button>`)}
      </div>
      <div class="scroll"><button aria-label="Top"><fl-icon name="stop"></fl-icon></button><button aria-label="Up"><fl-icon name="up"></fl-icon></button><div class="thumb"></div></div>
    </section>`;
  }

  private arrangement() {
    const bars = Array.from({ length: 60 }, (_, i) => 9 + i * 8);
    return html`<section class="arrange">
      <div class="map">
        <button aria-label="Scroll left"><fl-icon name="left"></fl-icon></button>
        <svg aria-hidden="true">
          <path fill="#765f7c" d="M8 4h22v1H8zM350 4h35v1h-35z"/><path fill="#77868b" d="M40 2h90v1H40zM132 2h60v1h-60zM200 2h50v1h-50zM40 5h60v1H40zM120 5h70v1h-70zM242 5h60v1h-60z"/>
          <path fill="#8e9170" d="M70 4h7v1h-7zM100 4h7v1h-7zM140 4h7v1h-7zM180 2h28v2h-28zM279 4h7v1h-7zM299 2h42v1h-42zM341 3h50v1h-50z"/>
        </svg>
      </div>
      <svg class="ruler"><path fill="#a8df4a" d="M1 1h7L4 5v4H2V5z"/>${bars.map((b) => svg`<text x=${Math.round(3.6 + (b - 1) * 2.828)} y="6.500">${b}</text>`)}</svg>
      <div class="lanes">
        <svg class="grid" aria-hidden="true">
          <defs>
            <pattern id="bars" x="2" width="45.250" height="20" patternUnits="userSpaceOnUse">
              <rect width="22.625" height="20" fill="#2b3c47"/><rect x="22.625" width="22.625" height="20" fill="#31454f"/>
              ${[0, 1, 2, 3, 4, 5, 6, 7].map((i) => svg`<rect x=${i * 5.656} width="1" height="20" fill="#253641"/>`)}
            </pattern>
          </defs>
          <rect width="100%" height="100%" fill="url(#bars)"/>
        </svg>
        <div class="rows">${TRACKS.map((t) => html`<fl-lane .clips=${t.clips}></fl-lane>`)}</div>
      </div>
      <div class="notice"><strong>Activate Windows</strong>Go to Settings to activate Windows.</div>
    </section>`;
  }

  render() {
    return html`
      ${this.topBars()}
      <div class="main">
        ${this.browser()}
        <main class="playlist">
          <div class="title">
            <button class="tool" aria-label="Menu">▸</button>
            <button class="tool on" aria-label="Snap"><fl-icon name="magnet"></fl-icon></button>
            ${TOOLS.map(([i, l, k]) => html`<button class="tool ${k}" aria-label=${l}><fl-icon name=${i}></fl-icon></button>`)}
            <button class="tool spk" aria-label="Preview"><fl-icon name="speaker"></fl-icon></button>
            <h1>Playlist - Arrangement › Pattern 1 (consolidated) ›</h1>
          </div>
          <div class="work">
            ${this.picker()}
            <section class="heads">
              <div class="corner"><div><fl-icon name="cross"></fl-icon><fl-icon name="auto"></fl-icon><fl-icon name="keys"></fl-icon></div><div class="zoomer"><i></i></div></div>
              ${TRACKS.map((t) => html`<div class=${classMap({ head: true, nested: !!t.nested, idle: !!t.idle })}><b>${t.name}</b><small>...</small>${t.parent ? html`<span>▴</span>` : nothing}<button aria-label="Mute ${t.name}"></button></div>`)}
            </section>
            ${this.arrangement()}
          </div>
        </main>
      </div>
      <footer class="taskbar">
        <input class="search" type="search" placeholder="Type here to search" aria-label="Search" />
        ${APPS.map(([i, l, k]) => html`<button class="app ${k}" aria-label=${l}><fl-icon name=${i}></fl-icon>${i === "mail" ? html`<span class="count">1</span>` : nothing}</button>`)}
        <div class="tray">
          ${["up", "cloud", "battery", "idm", "teal", "wifi", "speaker"].map((i) => html`<fl-icon name=${i}></fl-icon>`)}
          <span>ENG</span><div class="clock"><span class="hour">6:58 PM</span><span>8/23/2020</span></div>
        </div>
      </footer>`;
  }
}
